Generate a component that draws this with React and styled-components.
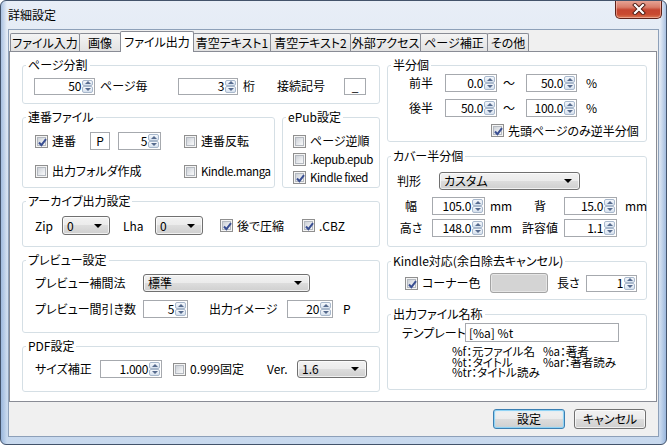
import styled, { createGlobalStyle } from "styled-components";

const GlobalStyle = createGlobalStyle`
  * {
    box-sizing: border-box;
  }
  html,
  body {
    margin: 0;
    padding: 0;
    background: #ffffff;
  }
  body {
    font-family: "Noto Sans CJK JP", "Noto Sans", sans-serif;
    font-size: 12px;
    color: #000;
    font-feature-settings: "palt";
  }
`;

const Window = styled.div`
  width: 667px;
  height: 445px;
  display: flex;
  flex-direction: column;
  border: 1px solid #43536b;
  border-radius: 6px;
  overflow: hidden;
  background: linear-gradient(
      90deg,
      rgba(96, 140, 200, 0.45) 0px,
      rgba(96, 140, 200, 0) 6px,
      rgba(96, 140, 200, 0) 659px,
      rgba(96, 140, 200, 0.45) 665px
    ),
    linear-gradient(180deg, #e8eef7 0%, #dbe5f2 30%, #c8d9ee 100%);
`;

const TitleBar = styled.div`
  flex: none;
  height: 28px;
  display: flex;
  align-items: center;
  padding-left: 7px;
`;

const Title = styled.span`
  font-size: 12px;
  line-height: 14px;
`;

const CloseButton = styled.div`
  margin-left: auto;
  margin-right: 4px;
  margin-top: -1px;
  align-self: flex-start;
  width: 47px;
  height: 19px;
  border: 1px solid #5e2219;
  border-top: none;
  border-radius: 0 0 5px 5px;
  background: linear-gradient(
    180deg,
    #e9a99b 0%,
    #d97c69 40%,
    #c54530 55%,
    #c94a30 80%,
    #d97a55 100%
  );
  box-shadow: inset 0 0 0 1px rgba(255, 210, 200, 0.5);
  display: flex;
  align-items: center;
  justify-content: center;
`;

const Client = styled.div`
  flex: 1;
  margin: 0 7px 7px 7px;
  background: #f0f0f0;
  border: 1px solid #8da0b9;
  display: flex;
  flex-direction: column;
  padding: 1px 1px 0 0;
`;

const TabStrip = styled.div`
  flex: none;
  height: 20px;
  display: flex;
  align-items: flex-end;
  padding-left: 1px;
`;

const Tab = styled.div`
  flex: none;
  width: ${(p) => p.w}px;
  height: ${(p) => (p.active ? 21 : 18)}px;
  margin-left: ${(p) => (p.first ? 0 : -1)}px;
  margin-bottom: ${(p) => (p.active ? -1 : 0)}px;
  border: 1px solid #898c95;
  border-bottom: none;
  border-radius: 2px 2px 0 0;
  background: ${(p) =>
    p.active ? "#ffffff" : "linear-gradient(180deg, #f4f4f4, #e2e2e2)"};
  position: relative;
  z-index: ${(p) => (p.active ? 2 : 1)};
  display: flex;
  align-items: center;
  justify-content: center;
  line-height: 14px;
  white-space: nowrap;
`;

const Panel = styled.div`
  flex: none;
  height: 351px;
  background: #ffffff;
  border: 1px solid #898c95;
  display: flex;
  gap: 7px;
  padding: 6px 0 0 12px;
`;

const Column = styled.div`
  flex: none;
  width: ${(p) => p.w}px;
  display: flex;
  flex-direction: column;
  gap: ${(p) => p.gap}px;
`;

const GroupRow = styled.div`
  display: flex;
  gap: 7px;
`;

const Group = styled.fieldset`
  margin: 0;
  padding: 0;
  min-width: 0;
  flex: none;
  width: ${(p) => (p.w ? `${p.w}px` : "auto")};
  height: ${(p) => p.h}px;
  border: 1px solid #d5dfe5;
  border-radius: 3px;
`;

const Legend = styled.legend`
  margin-left: 3px;
  padding: 0 2px;
  font-size: 12px;
  line-height: 14px;
`;

const GroupBody = styled.div`
  display: flex;
  flex-direction: column;
  padding: ${(p) => p.pt}px 0 0 ${(p) => p.pl}px;
`;

const Row = styled.div`
  display: flex;
  align-items: center;
  height: ${(p) => p.h || 18}px;
  margin-top: ${(p) => p.mt || 0}px;
  margin-left: ${(p) => p.ml || 0}px;
`;

const Cell = styled.div`
  flex: none;
  width: ${(p) => p.w}px;
  padding-right: ${(p) => p.pr || 0}px;
  display: flex;
  align-items: center;
  justify-content: ${(p) => (p.center ? "center" : "flex-start")};
`;

const Label = styled.span`
  white-space: nowrap;
  line-height: 14px;
  font-size: ${(p) => (p.tight ? "11.5px" : "12px")};
  letter-spacing: ${(p) => (p.tight ? "-0.4px" : "normal")};
`;

const SpinFrame = styled.div`
  flex: none;
  width: ${(p) => p.w}px;
  height: ${(p) => p.h}px;
  display: flex;
  border: 1px solid #a6a9ae;
  background: #ffffff;
`;

const SpinValue = styled.span`
  flex: 1;
  display: flex;
  align-items: center;
  justify-content: flex-end;
  padding-right: 1px;
  line-height: 14px;
  letter-spacing: -0.3px;
`;

const SpinButtons = styled.div`
  flex: none;
  width: 12px;
  display: flex;
  flex-direction: column;
  padding: 1px 1px 1px 0;
`;

const SpinArrow = styled.div`
  flex: 1;
  border: 1px solid #a8b8cc;
  border-radius: 2px;
  background: linear-gradient(180deg, #f5f8fc, #d6e1ee);
  display: flex;
  align-items: center;
  justify-content: center;
`;

const Triangle = styled.span`
  width: 0;
  height: 0;
  border-left: 3px solid transparent;
  border-right: 3px solid transparent;
  border-bottom: ${(p) => (p.up ? "3px solid #566b8e" : "none")};
  border-top: ${(p) => (p.up ? "none" : "3px solid #566b8e")};
`;

const CheckWrap = styled.span`
  display: inline-flex;
  align-items: center;
  gap: 4px;
`;

const CheckFrame = styled.span`
  flex: none;
  position: relative;
  width: 13px;
  height: 13px;
  border: 1px solid #8f8f8f;
  background: #f4f4f4;
  padding: 1px;
  display: flex;
`;

const CheckInner = styled.span`
  flex: 1;
  border: 1px solid #b4b9c0;
  background: linear-gradient(135deg, #cdd1d7 0%, #eceef1 70%, #f8f8f8 100%);
`;

const CheckMark = styled.svg`
  position: absolute;
  left: 0;
  top: 0;
`;

const ComboFrame = styled.div`
  flex: none;
  width: ${(p) => p.w}px;
  height: ${(p) => p.h}px;
  border: 1px solid #707070;
  border-radius: 3px;
  background: linear-gradient(
    180deg,
    #f2f2f2 0%,
    #ebebeb 50%,
    #dddddd 50%,
    #cfcfcf 100%
  );
  box-shadow: inset 0 0 0 1px rgba(255, 255, 255, 0.7);
  display: flex;
  align-items: center;
  padding: 0 7px 0 4px;
`;

const ComboText = styled.span`
  flex: 1;
  line-height: 14px;
  white-space: nowrap;
`;

const ComboArrow = styled.span`
  width: 0;
  height: 0;
  border-left: 4px solid transparent;
  border-right: 4px solid transparent;
  border-top: 4px solid #000;
`;

const TextBox = styled.div`
  flex: none;
  width: ${(p) => p.w}px;
  height: ${(p) => p.h}px;
  border: 1px solid #a6a9ae;
  background: #ffffff;
  display: flex;
  align-items: center;
  justify-content: ${(p) => (p.center ? "center" : "flex-start")};
  padding: 0 3px;
  line-height: 14px;
  white-space: nowrap;
`;

const Swatch = styled.div`
  flex: none;
  width: 58px;
  height: 20px;
  border: 1px solid #a3a3a3;
  border-radius: 3px;
  background: #d4d4d4;
  box-shadow: inset 0 0 0 1px #e6e6e6;
`;

const HelpGrid = styled.div`
  display: grid;
  grid-template-columns: 91px auto;
  margin: 4px 0 0 50px;
  font-size: 11.5px;
  line-height: 10.5px;
  white-space: nowrap;
`;

const Footer = styled.div`
  flex: 1;
  display: flex;
  justify-content: flex-end;
  align-items: flex-start;
  gap: 9px;
  padding: 7px 11px 0 0;
`;

const Button = styled.div`
  width: 72px;
  height: 20px;
  border: 1px solid ${(p) => (p.primary ? "#3c7fb1" : "#707070")};
  border-radius: 3px;
  background: linear-gradient(
    180deg,
    #f2f2f2 0%,
    #ebebeb 50%,
    #dddddd 50%,
    #cfcfcf 100%
  );
  box-shadow: ${(p) =>
    p.primary
      ? "inset 0 0 0 1px #8fd3f5, inset 0 0 3px #9fdcf8"
      : "inset 0 0 0 1px rgba(255,255,255,0.7)"};
  display: flex;
  align-items: center;
  justify-content: center;
  line-height: 14px;
`;

function Spin({ w, h = 17, value }) {
  return (
    <SpinFrame w={w} h={h}>
      <SpinValue>{value}</SpinValue>
      <SpinButtons>
        <SpinArrow>
          <Triangle up />
        </SpinArrow>
        <SpinArrow>
          <Triangle />
        </SpinArrow>
      </SpinButtons>
    </SpinFrame>
  );
}

function CheckItem({ checked, tight, children }) {
  return (
    <CheckWrap>
      <CheckFrame>
        <CheckInner />
        {checked && (
          <CheckMark width="13" height="13" viewBox="0 0 13 13">
            <path
              d="M3 6.5 L5.4 9.2 L10 3.2"
              fill="none"
              stroke="#3a4f92"
              strokeWidth="2"
            />
          </CheckMark>
        )}
      </CheckFrame>
      <Label tight={tight}>{children}</Label>
    </CheckWrap>
  );
}

function Combo({ w, h = 19, value }) {
  return (
    <ComboFrame w={w} h={h}>
      <ComboText>{value}</ComboText>
      <ComboArrow />
    </ComboFrame>
  );
}

const tabs = [
  { label: "ファイル入力", w: 70 },
  { label: "画像", w: 42 },
  { label: "ファイル出力", w: 74, active: true },
  { label: "青空テキスト1", w: 78 },
  { label: "青空テキスト2", w: 81 },
  { label: "外部アクセス", w: 71 },
  { label: "ページ補正", w: 68 },
  { label: "その他", w: 42 },
];

export default function App() {
  return (
    <>
      <GlobalStyle />
      <Window>
        <TitleBar>
          <Title>詳細設定</Title>
          <CloseButton>
            <svg width="14" height="12" viewBox="0 0 14 12">
              <path
                d="M3 2 L11 10 M11 2 L3 10"
                stroke="#4b1a12"
                strokeWidth="4"
                strokeLinecap="square"
              />
              <path
                d="M3 2 L11 10 M11 2 L3 10"
                stroke="#ffffff"
                strokeWidth="2.2"
                strokeLinecap="square"
              />
            </svg>
          </CloseButton>
        </TitleBar>

        <Client>
          <TabStrip>
            {tabs.map((t, i) => (
              <Tab key={t.label} w={t.w} active={t.active} first={i === 0}>
                {t.label}
              </Tab>
            ))}
          </TabStrip>

          <Panel>
            <Column w={358} gap={6}>
              <Group h={46}>
                <Legend>ページ分割</Legend>
                <GroupBody pt={5} pl={11}>
                  <Row>
                    <Cell w={66}>
                      <Spin w={61} value="50" />
                    </Cell>
                    <Cell w={78}>
                      <Label>ページ毎</Label>
                    </Cell>
                    <Cell w={65}>
                      <Spin w={60} value="3" />
                    </Cell>
                    <Cell w={34}>
                      <Label>桁</Label>
                    </Cell>
                    <Cell w={67}>
                      <Label>接続記号</Label>
                    </Cell>
                    <TextBox w={22} h={17} center>
                      _
                    </TextBox>
                  </Row>
                </GroupBody>
              </Group>

              <GroupRow>
                <Group w={253} h={78}>
                  <Legend>連番ファイル</Legend>
                  <GroupBody pt={8} pl={12}>
                    <Row>
                      <Cell w={55}>
                        <CheckItem checked>連番</CheckItem>
                      </Cell>
                      <Cell w={28}>
                        <TextBox w={20} h={18} center>
                          P
                        </TextBox>
                      </Cell>
                      <Cell w={66}>
                        <Spin w={43} h={18} value="5" />
                      </Cell>
                      <CheckItem>連番反転</CheckItem>
                    </Row>
                    <Row mt={12}>
                      <Cell w={149}>
                        <CheckItem>出力フォルダ作成</CheckItem>
                      </Cell>
                      <CheckItem tight>Kindle.manga</CheckItem>
                    </Row>
                  </GroupBody>
                </Group>
                <Group w={98} h={78}>
                  <Legend>ePub設定</Legend>
                  <GroupBody pt={8} pl={10}>
                    <Row>
                      <CheckItem>ページ逆順</CheckItem>
                    </Row>
                    <Row>
                      <CheckItem tight>.kepub.epub</CheckItem>
                    </Row>
                    <Row>
                      <CheckItem checked tight>
                        Kindle fixed
                      </CheckItem>
                    </Row>
                  </GroupBody>
                </Group>
              </GroupRow>

              <Group h={53}>
                <Legend>アーカイブ出力設定</Legend>
                <GroupBody pt={8} pl={12}>
                  <Row h={19}>
                    <Cell w={27}>
                      <Label>Zip</Label>
                    </Cell>
                    <Cell w={61}>
                      <Combo w={48} value="0" />
                    </Cell>
                    <Cell w={32}>
                      <Label>Lha</Label>
                    </Cell>
                    <Cell w={65}>
                      <Combo w={48} value="0" />
                    </Cell>
                    <Cell w={82}>
                      <CheckItem checked>後で圧縮</CheckItem>
                    </Cell>
                    <CheckItem checked>.CBZ</CheckItem>
                  </Row>
                </GroupBody>
              </Group>

              <Group h={80}>
                <Legend>プレビュー設定</Legend>
                <GroupBody pt={7} pl={12}>
                  <Row>
                    <Cell w={108}>
                      <Label>プレビュー補間法</Label>
                    </Cell>
                    <Combo w={167} h={18} value="標準" />
                  </Row>
                  <Row mt={8}>
                    <Cell w={108}>
                      <Label>プレビュー間引き数</Label>
                    </Cell>
                    <Cell w={66}>
                      <Spin w={45} h={18} value="5" />
                    </Cell>
                    <Cell w={78}>
                      <Label>出力イメージ</Label>
                    </Cell>
                    <Cell w={56}>
                      <Spin w={46} h={18} value="20" />
                    </Cell>
                    <Label>P</Label>
                  </Row>
                </GroupBody>
              </Group>

              <Group h={53}>
                <Legend>PDF設定</Legend>
                <GroupBody pt={7} pl={12}>
                  <Row>
                    <Cell w={65}>
                      <Label>サイズ補正</Label>
                    </Cell>
                    <Cell w={73}>
                      <Spin w={62} h={18} value="1.000" />
                    </Cell>
                    <Cell w={94}>
                      <CheckItem>0.999固定</CheckItem>
                    </Cell>
                    <Cell w={30}>
                      <Label>Ver.</Label>
                    </Cell>
                    <Combo w={70} h={18} value="1.6" />
                  </Row>
                </GroupBody>
              </Group>
            </Column>

            <Column w={260} gap={7}>
              <Group h={84}>
                <Legend>半分個</Legend>
                <GroupBody pt={2} pl={21}>
                  <Row>
                    <Cell w={36}>
                      <Label>前半</Label>
                    </Cell>
                    <Cell w={58}>
                      <Spin w={52} h={18} value="0.0" />
                    </Cell>
                    <Cell w={23}>
                      <Label>～</Label>
                    </Cell>
                    <Cell w={60}>
                      <Spin w={51} h={18} value="50.0" />
                    </Cell>
                    <Label>%</Label>
                  </Row>
                  <Row mt={7}>
                    <Cell w={36}>
                      <Label>後半</Label>
                    </Cell>
                    <Cell w={58}>
                      <Spin w={52} h={18} value="50.0" />
                    </Cell>
                    <Cell w={23}>
                      <Label>～</Label>
                    </Cell>
                    <Cell w={60}>
                      <Spin w={51} h={18} value="100.0" />
                    </Cell>
                    <Label>%</Label>
                  </Row>
                  <Row mt={5} h={17} ml={82}>
                    <CheckItem checked>先頭ページのみ逆半分個</CheckItem>
                  </Row>
                </GroupBody>
              </Group>

              <Group h={98}>
                <Legend>カバー半分個</Legend>
                <GroupBody pt={9} pl={9}>
                  <Row>
                    <Cell w={42}>
                      <Label>判形</Label>
                    </Cell>
                    <Combo w={141} h={18} value="カスタム" />
                  </Row>
                  <Row mt={7}>
                    <Cell w={35} pr={7} center>
                      <Label>幅</Label>
                    </Cell>
                    <Cell w={58}>
                      <Spin w={53} h={18} value="105.0" />
                    </Cell>
                    <Cell w={26}>
                      <Label>mm</Label>
                    </Cell>
                    <Cell w={48} center>
                      <Label>背</Label>
                    </Cell>
                    <Cell w={61}>
                      <Spin w={53} h={18} value="15.0" />
                    </Cell>
                    <Label>mm</Label>
                  </Row>
                  <Row mt={4}>
                    <Cell w={35} pr={7} center>
                      <Label>高さ</Label>
                    </Cell>
                    <Cell w={58}>
                      <Spin w={53} h={18} value="148.0" />
                    </Cell>
                    <Cell w={26}>
                      <Label>mm</Label>
                    </Cell>
                    <Cell w={48} center>
                      <Label>許容値</Label>
                    </Cell>
                    <Cell w={61}>
                      <Spin w={53} h={18} value="1.1" />
                    </Cell>
                  </Row>
                </GroupBody>
              </Group>

              <Group h={46}>
                <Legend>Kindle対応(余白除去キャンセル)</Legend>
                <GroupBody pt={5} pl={17}>
                  <Row h={20}>
                    <Cell w={85}>
                      <CheckItem checked>コーナー色</CheckItem>
                    </Cell>
                    <Cell w={67}>
                      <Swatch />
                    </Cell>
                    <Cell w={29}>
                      <Label>長さ</Label>
                    </Cell>
                    <Spin w={51} h={17} value="1" />
                  </Row>
                </GroupBody>
              </Group>

              <Group h={83}>
                <Legend>出力ファイル名称</Legend>
                <GroupBody pt={2} pl={14}>
                  <Row h={19}>
                    <Cell w={63}>
                      <Label>テンプレート</Label>
                    </Cell>
                    <TextBox w={154} h={19}>
                      [%a] %t
                    </TextBox>
                  </Row>
                  <HelpGrid>
                    <span>%f：元ファイル名</span>
                    <span>%a：著者</span>
                    <span>%t：タイトル</span>
                    <span>%ar：著者読み</span>
                    <span>%tr：タイトル読み</span>
                  </HelpGrid>
                </GroupBody>
              </Group>
            </Column>
          </Panel>

          <Footer>
            <Button primary>設定</Button>
            <Button>キャンセル</Button>
          </Footer>
        </Client>
      </Window>
    </>
  );
}
